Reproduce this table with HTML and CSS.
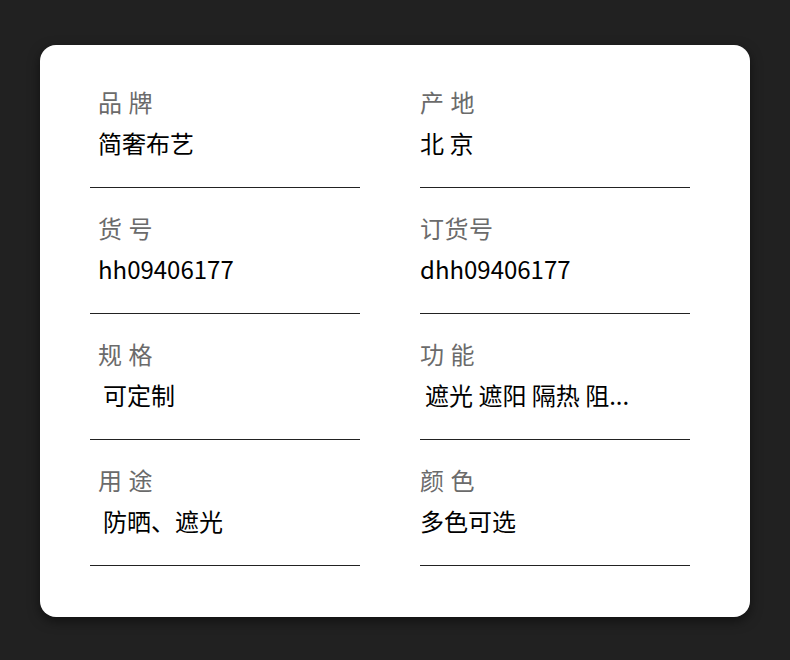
FILE: index.html
```html
<!DOCTYPE html>
<html lang="zh-CN">
<head>
    <meta charset="UTF-8">
    <meta name="viewport" content="width=device-width, initial-scale=1.0">
    <title>商品参数</title>
    <link rel="stylesheet" href="styles.css">
</head>
<body>

    <div class="spec-card">
        <div class="spec-grid">
            <div class="spec-item">
                <div class="spec-label">品 牌</div>
                <div class="spec-value">简奢布艺</div>
            </div>
            <div class="spec-item">
                <div class="spec-label">产 地</div>
                <div class="spec-value">北 京</div>
            </div>
            <div class="spec-item">
                <div class="spec-label">货 号</div>
                <div class="spec-value">hh09406177</div>
            </div>
            <div class="spec-item">
                <div class="spec-label">订货号</div>
                <div class="spec-value">dhh09406177</div>
            </div>
            <div class="spec-item">
                <div class="spec-label">规 格</div>
                <div class="spec-value indent">可定制</div>
            </div>
            <div class="spec-item">
                <div class="spec-label">功 能</div>
                <div class="spec-value indent">遮光 遮阳 隔热 阻...</div>
            </div>
            <div class="spec-item">
                <div class="spec-label">用 途</div>
                <div class="spec-value indent">防晒、遮光</div>
            </div>
            <div class="spec-item">
                <div class="spec-label">颜 色</div>
                <div class="spec-value">多色可选</div>
            </div>
        </div>
    </div>

</body>
</html>
```
FILE: styles.css
```css
body {
    margin: 0;
    padding: 45px 40px 43px 40px;
    background-color: #212121;
    font-family: "Noto Sans CJK SC", "Noto Sans", sans-serif;
}

.spec-card {
    background-color: #fff;
    border-radius: 16px;
    padding: 17px 60px 51px 50px;
    box-shadow: 0 4px 12px rgba(0, 0, 0, 0.5);
}

.spec-grid {
    display: grid;
    grid-template-columns: 270px 270px;
    column-gap: 60px;
}

.spec-item {
    height: 126px;
    box-sizing: border-box;
    padding: 24px 8px 0 8px;
    border-bottom: 1px solid #222;
}

.spec-item:nth-child(even) {
    padding-left: 0;
}

.spec-label {
    font-size: 24px;
    line-height: 32px;
    color: #6b6b6b;
    letter-spacing: 0.5px;
}

.spec-value {
    font-size: 24px;
    line-height: 32px;
    margin-top: 9px;
    color: #000;
    white-space: nowrap;
}

.spec-value.indent {
    padding-left: 5px;
}
```
